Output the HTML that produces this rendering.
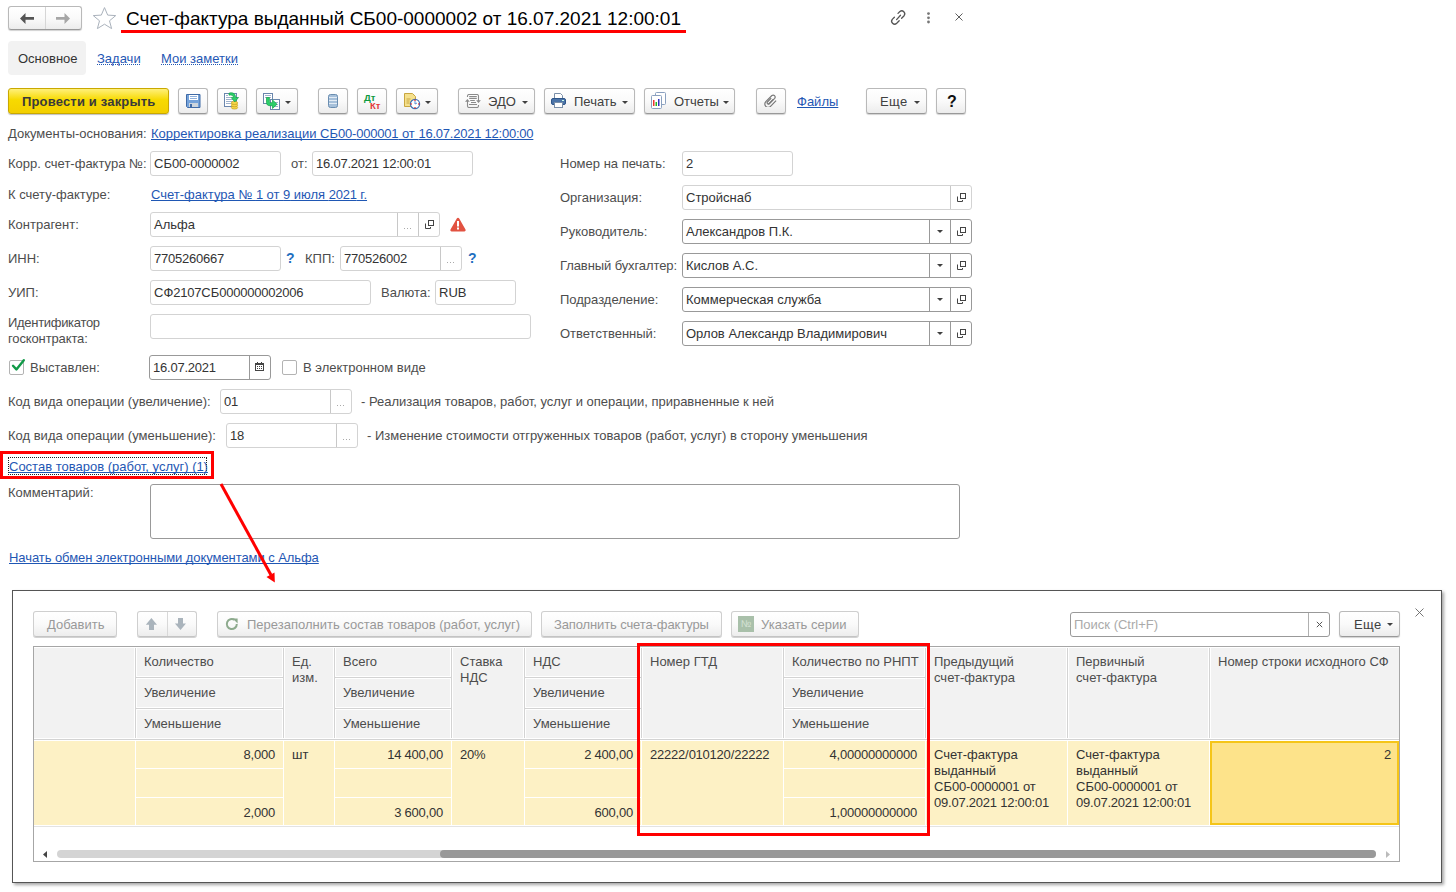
<!DOCTYPE html><html><head><meta charset="utf-8"><title>1C</title><style>
*{margin:0;padding:0;box-sizing:border-box}
html,body{width:1456px;height:892px;overflow:hidden;background:#fff}
body{position:relative;font-family:"Liberation Sans",sans-serif;font-size:13px;color:#4d4d4d}
.t{position:absolute;white-space:nowrap}
.lnk{text-decoration:underline;text-underline-offset:1px;text-decoration-skip-ink:none}
.b{position:absolute}
.inp{position:absolute;border:1px solid #d3d3d3;border-radius:3px;background:#fff}
.it{position:absolute;white-space:nowrap;color:#333;line-height:15px;font-size:13px}
.ib{position:absolute;top:0;bottom:0}
.btn{position:absolute;border:1px solid #b9b9b9;border-bottom-color:#999;border-radius:3px;background:linear-gradient(#fff,#fafafa 50%,#ececec);box-shadow:0 1px 1px rgba(0,0,0,.18)}
.btn .t{color:#404040}
.dbtn{position:absolute;border:1px solid #cfcfcf;border-bottom-color:#c4c4c4;border-radius:3px;background:linear-gradient(#fff,#fafafa 50%,#ededed);box-shadow:0 1px 0 #d2d2d2}
.ic{position:absolute}
svg{display:block}
.d{letter-spacing:-0.23px}
</style></head><body>
<div class="btn" style="left:8px;top:6px;width:74px;height:24px"></div>
<div class="b" style="left:45px;top:7px;width:1px;height:22px;background:#d6d6d6"></div>
<svg class="ic" style="left:20px;top:13px" width="15" height="11" viewBox="0 0 15 11"><path d="M0 5.5L5.5 0v4h8.5v2.8H5.5V11z" fill="#555"/></svg>
<svg class="ic" style="left:56px;top:13px" width="15" height="11" viewBox="0 0 15 11"><path d="M14 5.5L8.5 0v4H0v2.8h8.5V11z" fill="#a6a6a6"/></svg>
<svg class="ic" style="left:92px;top:6px" width="25" height="24" viewBox="0 0 25 24"><path d="M12.5 1.6l3.2 7.5 8 .5-6.2 5.2 2.1 7.8-7.1-4.4-7.1 4.4 2.1-7.8L1.3 9.6l8-.5z" fill="none" stroke="#aab2bc" stroke-width="1"/></svg>
<div class="t " style="left:126px;top:8px;font-size:19px;line-height:22px;color:#000;font-weight:normal;">Счет-фактура выданный СБ00-0000002 от 16.07.2021 12:00:01</div>
<div class="b" style="left:121px;top:30px;width:565px;height:3px;background:#f00"></div>
<svg class="ic" style="left:886px;top:5px" width="24" height="24" viewBox="0 0 24 24"><g fill="none" stroke="#555" stroke-width="1.3" stroke-linecap="round"><path d="M12 8.4L13.9 6.5A3 3 0 0 1 18.1 10.7L15.6 13.2"/><path d="M13.2 15.8L10.72 18.32A3 3 0 0 1 6.48 14.08L8.4 12.2"/><path d="M10.6 14.6L14.5 10.3"/></g></svg>
<svg class="ic" style="left:926px;top:12px" width="5" height="12" viewBox="0 0 5 12"><circle cx="2.5" cy="1.6" r="1.4" fill="#777"/><circle cx="2.5" cy="5.8" r="1.4" fill="#777"/><circle cx="2.5" cy="10" r="1.4" fill="#777"/></svg>
<svg class="ic" style="left:955px;top:13px" width="8" height="8" viewBox="0 0 8 8"><path d="M0.5 0.5l7 7M7.5 0.5l-7 7" stroke="#555" stroke-width="0.95"/></svg>
<div class="b" style="left:8px;top:41px;width:78px;height:34px;background:#f2f2f2;border-radius:4px"></div>
<div class="t " style="left:18px;top:51px;font-size:13px;line-height:15px;color:#333;font-weight:normal;">Основное</div>
<div class="t " style="left:97px;top:51px;font-size:13px;line-height:15px;color:#1f57b4;font-weight:normal;">Задачи</div>
<div class="t " style="left:161px;top:51px;font-size:13px;line-height:15px;color:#1f57b4;font-weight:normal;">Мои заметки</div>
<div class="b" style="left:97px;top:64px;width:43px;height:1px;border-top:1px dotted #1f57b4"></div>
<div class="b" style="left:161px;top:64px;width:77px;height:1px;border-top:1px dotted #1f57b4"></div>
<div class="b" style="left:8px;top:88px;width:161px;height:26px;border:1px solid #c9a800;border-radius:3px;background:linear-gradient(#fff07a,#f7da00 45%,#f3cf00);box-shadow:0 1px 1px rgba(0,0,0,.25)"></div>
<div class="t " style="left:22px;top:94px;font-size:13px;line-height:15px;color:#3a3a3a;font-weight:bold;letter-spacing:0.17px">Провести и закрыть</div>
<div class="btn" style="left:178px;top:88px;width:30px;height:26px"></div>
<div class="btn" style="left:217px;top:88px;width:30px;height:26px"></div>
<div class="btn" style="left:256px;top:88px;width:42px;height:26px"></div>
<div class="btn" style="left:318px;top:88px;width:30px;height:26px"></div>
<div class="btn" style="left:357px;top:88px;width:30px;height:26px"></div>
<div class="btn" style="left:396px;top:88px;width:42px;height:26px"></div>
<div class="btn" style="left:458px;top:88px;width:77px;height:26px"></div>
<div class="btn" style="left:544px;top:88px;width:91px;height:26px"></div>
<div class="btn" style="left:644px;top:88px;width:91px;height:26px"></div>
<div class="btn" style="left:756px;top:88px;width:30px;height:26px"></div>
<div class="btn" style="left:866px;top:88px;width:61px;height:26px"></div>
<div class="btn" style="left:936px;top:88px;width:30px;height:26px"></div>
<svg class="ic" style="left:186px;top:94px" width="15" height="14" viewBox="0 0 15 14"><path d="M0.5 0.5h13.5v13h-12.5l-1-1z" fill="#74a2da" stroke="#3f6aa6"/><rect x="3" y="1" width="9" height="5" fill="#fff"/><path d="M4 2.5h7M4 4.5h7" stroke="#8eb0dc"/><rect x="3" y="9" width="9" height="4" fill="#cdd5dd"/><rect x="4" y="10" width="2" height="3" fill="#3f6aa6"/></svg>
<svg class="ic" style="left:223px;top:92px" width="17" height="18" viewBox="0 0 17 18"><rect x="1.5" y="1.5" width="12" height="13" fill="#fff" stroke="#6a86ad"/><path d="M3 3.5h2M3 5.5h5M3 7.5h7M3 9.5h7M3 11.5h6" stroke="#9fb2cc"/><g stroke="#c9a21b" stroke-width=".7" fill="#f4d54a"><ellipse cx="11.5" cy="15.5" rx="3.2" ry="1.6"/><ellipse cx="11.5" cy="13.2" rx="3.2" ry="1.6"/><ellipse cx="11.5" cy="10.9" rx="3.2" ry="1.6"/></g><path d="M6 1.2C9 0.2 12.5 1 12.5 5.5H15.5L11.8 10 8.2 5.5H10.5C10.3 3.3 8.6 2.6 6 3.2z" fill="#2ccf6a" stroke="#12a048" stroke-width=".7"/></svg>
<svg class="ic" style="left:262px;top:92px" width="19" height="19" viewBox="0 0 19 19"><rect x="1.5" y="1.5" width="9" height="10" fill="#fff" stroke="#6a86ad"/><path d="M3 3.5h6M3 5.5h6" stroke="#9fb2cc"/><rect x="8.5" y="7.5" width="9" height="10" fill="#fff" stroke="#6a86ad"/><path d="M11 10.5h5M11 12.5h5M11 14.5h5" stroke="#9fb2cc"/><path d="M4.5 5.5v5c0 2.2 1.3 3.2 3.5 3.2h2.5v2.8l4.5-4.3-4.5-4.3v2.8H8.3c-.6 0-.9-.3-.9-.9V5.5z" fill="#2ccf6a" stroke="#12a048" stroke-width=".7"/></svg>
<div class="ic" style="left:285px;top:101px"><svg width="6" height="3" viewBox="0 0 6 3"><path d="M0 0h6L3 3z" fill="#404040"/></svg></div>
<svg class="ic" style="left:328px;top:94px" width="10" height="14" viewBox="0 0 10 14"><rect x="0.5" y="0.5" width="9" height="13" rx="2" fill="#a6c0da" stroke="#6a8db0"/><path d="M1 3.5h8M1 6.5h8M1 9.5h8" stroke="#e3ecf5"/></svg>
<div class="t" style="left:364px;top:93px;font-size:9.5px;line-height:10px;color:#0d9a3e;font-weight:bold">Дт</div>
<div class="t" style="left:370px;top:101px;font-size:9.5px;line-height:10px;color:#e23a3a;font-weight:bold">Кт</div>
<svg class="ic" style="left:404px;top:93px" width="17" height="17" viewBox="0 0 17 17"><path d="M0.5 0.5h8l3 3v10h-11z" fill="#f5e08c" stroke="#c8a640"/><path d="M2.5 6h4M2.5 8h3M2.5 10h3" stroke="#c8a640"/><circle cx="11" cy="11" r="4.6" fill="#fff" stroke="#3f70b5" stroke-width="1.2"/><path d="M11 8v3l2-1" stroke="#5a8ad0" fill="none"/><circle cx="11" cy="7.2" r=".8" fill="#e22"/><circle cx="11" cy="14.8" r=".8" fill="#e22"/><circle cx="7.2" cy="11" r=".8" fill="#e22"/><circle cx="14.8" cy="11" r=".8" fill="#e22"/></svg>
<div class="ic" style="left:425px;top:101px"><svg width="6" height="3" viewBox="0 0 6 3"><path d="M0 0h6L3 3z" fill="#404040"/></svg></div>
<svg class="ic" style="left:465px;top:94px" width="16" height="14" viewBox="0 0 16 14"><g fill="none" stroke="#8a8a8a" stroke-width="1.1"><path d="M2.5 3V2Q2.5 .5 4 .5H12Q13.5 .5 13.5 2V7"/><path d="M2.5 7V12Q2.5 13.5 4 13.5H12Q13.5 13.5 13.5 12V11"/><path d="M4.2 2.5H11.8M4.2 4.4H11.8M5.2 6.5H9.8M6 8.5H11M4 10.5H12"/></g><path d="M11.1 6.2H15.9L13.5 9z M0 7.8H4.8L2.4 5z" fill="#8a8a8a"/></svg>
<div class="t " style="left:488px;top:94px;font-size:13px;line-height:15px;color:#404040;font-weight:normal;">ЭДО</div>
<div class="ic" style="left:522px;top:101px"><svg width="6" height="3" viewBox="0 0 6 3"><path d="M0 0h6L3 3z" fill="#404040"/></svg></div>
<svg class="ic" style="left:551px;top:93px" width="15" height="15" viewBox="0 0 15 15"><path d="M3.5 0.5h6l2 2v3h-8z" fill="#fff" stroke="#7a8fa8"/><rect x="0.5" y="5.5" width="14" height="6" rx="1.5" fill="#4b74a8" stroke="#2f5689"/><rect x="3.5" y="9.5" width="8" height="5" fill="#fff" stroke="#7a8fa8"/><rect x="11" y="7" width="2" height="1" fill="#cfe"/></svg>
<div class="t " style="left:574px;top:94px;font-size:13px;line-height:15px;color:#404040;font-weight:normal;">Печать</div>
<div class="ic" style="left:622px;top:101px"><svg width="6" height="3" viewBox="0 0 6 3"><path d="M0 0h6L3 3z" fill="#404040"/></svg></div>
<svg class="ic" style="left:650px;top:92px" width="17" height="17" viewBox="0 0 17 17"><rect x="5.5" y="0.5" width="10" height="12" rx="1" fill="#fff" stroke="#8aa0bf"/><rect x="1.5" y="3.5" width="10" height="13" rx="1" fill="#fff" stroke="#8aa0bf"/><rect x="3" y="8" width="1.5" height="6" fill="#e33"/><rect x="5.5" y="10" width="1.5" height="4" fill="#2b2"/><rect x="8" y="7" width="1.5" height="7" fill="#33b"/></svg>
<div class="t " style="left:674px;top:94px;font-size:13px;line-height:15px;color:#404040;font-weight:normal;">Отчеты</div>
<div class="ic" style="left:723px;top:101px"><svg width="6" height="3" viewBox="0 0 6 3"><path d="M0 0h6L3 3z" fill="#404040"/></svg></div>
<svg class="ic" style="left:764px;top:93px" width="14" height="14" viewBox="0 0 14 14"><path d="M4.5 11.5l6.2-6.2a2 2 0 0 0-2.8-2.8L1.8 8.6a3.3 3.3 0 0 0 4.7 4.7l5.6-5.6" fill="none" stroke="#777" stroke-width="1.2"/><path d="M7.2 5.2l-3.8 3.8a1.1 1.1 0 0 0 1.6 1.6l4.1-4.1" fill="none" stroke="#777" stroke-width="1.2"/></svg>
<div class="t lnk" style="left:797px;top:94px;font-size:13px;line-height:15px;color:#1f57b4;font-weight:normal;">Файлы</div>
<div class="t " style="left:880px;top:94px;font-size:13px;line-height:15px;color:#404040;font-weight:normal;letter-spacing:0.45px">Еще</div>
<div class="ic" style="left:914px;top:101px"><svg width="6" height="3" viewBox="0 0 6 3"><path d="M0 0h6L3 3z" fill="#404040"/></svg></div>
<div class="t" style="left:947px;top:93px;font-size:16px;line-height:18px;color:#111;font-weight:bold">?</div>
<div class="t " style="left:8px;top:126px;font-size:13px;line-height:15px;color:#4d4d4d;font-weight:normal;">Документы-основания:</div>
<div class="t lnk" style="left:151px;top:126px;font-size:13px;line-height:15px;color:#1f57b4;font-weight:normal;">Корректировка реализации СБ<span class="d">00</span>-<span class="d">000001</span> от <span class="d">16.07.2021 12:00:00</span></div>
<div class="t " style="left:8px;top:156px;font-size:13px;line-height:15px;color:#4d4d4d;font-weight:normal;">Корр. счет-фактура №:</div>
<div class="inp" style="left:150px;top:151px;width:131px;height:25px;border-color:#d3d3d3">
<div class="it" style="left:3px;top:4px">СБ<span class="d">00</span>-<span class="d">0000002</span></div>
</div>
<div class="t " style="left:291px;top:156px;font-size:13px;line-height:15px;color:#4d4d4d;font-weight:normal;">от:</div>
<div class="inp" style="left:312px;top:151px;width:161px;height:25px;border-color:#d3d3d3">
<div class="it" style="left:3px;top:4px"><span class="d">16.07.2021 12:00:01</span></div>
</div>
<div class="t " style="left:8px;top:187px;font-size:13px;line-height:15px;color:#4d4d4d;font-weight:normal;">К счету-фактуре:</div>
<div class="t lnk" style="left:151px;top:187px;font-size:13px;line-height:15px;color:#1f57b4;font-weight:normal;">Счет-фактура № <span class="d">1</span> от <span class="d">9</span> июля <span class="d">2021</span> г.</div>
<div class="t " style="left:8px;top:217px;font-size:13px;line-height:15px;color:#4d4d4d;font-weight:normal;">Контрагент:</div>
<div class="inp" style="left:150px;top:212px;width:290px;height:25px;border-color:#d3d3d3">
<div class="it" style="left:3px;top:4px">Альфа</div>
<div class="ib" style="left:267px;width:21px;border-left:1px solid #c8c8c8">
<div style="position:absolute;left:6px;top:7px"><svg width="9" height="9" viewBox="0 0 9 9"><path d="M0.5 3.5v5h5v-1.5" fill="none" stroke="#444" stroke-width="1"/><rect x="3.5" y="0.5" width="5" height="5" fill="none" stroke="#444" stroke-width="1"/></svg></div>
</div>
<div class="ib" style="left:246px;width:21px;border-left:1px solid #c8c8c8">
<div style="position:absolute;left:6px;top:14px"><svg width="8" height="3" viewBox="0 0 8 3"><rect x="0" y="1" width="1" height="1" fill="#aaa"/><rect x="3" y="1" width="1" height="1" fill="#aaa"/><rect x="6" y="1" width="1" height="1" fill="#aaa"/></svg></div>
</div>
</div>
<svg class="ic" style="left:450px;top:217px" width="16" height="15" viewBox="0 0 16 15"><path d="M8 0.8c.5 0 .9.3 1.2.8l6.3 11c.5.9-.1 2-1.2 2H1.7c-1.1 0-1.7-1.1-1.2-2l6.3-11c.3-.5.7-.8 1.2-.8z" fill="#e25241"/><rect x="7" y="4" width="2" height="5.5" fill="#fff"/><rect x="7" y="10.5" width="2" height="2" fill="#fff"/></svg>
<div class="t " style="left:8px;top:251px;font-size:13px;line-height:15px;color:#4d4d4d;font-weight:normal;">ИНН:</div>
<div class="inp" style="left:150px;top:246px;width:131px;height:25px;border-color:#d3d3d3">
<div class="it" style="left:3px;top:4px"><span class="d">7705260667</span></div>
</div>
<div class="t " style="left:286px;top:250px;font-size:14px;line-height:16px;color:#1f6fc0;font-weight:bold;">?</div>
<div class="t " style="left:305px;top:251px;font-size:13px;line-height:15px;color:#4d4d4d;font-weight:normal;">КПП:</div>
<div class="inp" style="left:340px;top:246px;width:122px;height:25px;border-color:#d3d3d3">
<div class="it" style="left:3px;top:4px"><span class="d">770526002</span></div>
<div class="ib" style="left:99px;width:21px;border-left:1px solid #c8c8c8">
<div style="position:absolute;left:6px;top:14px"><svg width="8" height="3" viewBox="0 0 8 3"><rect x="0" y="1" width="1" height="1" fill="#aaa"/><rect x="3" y="1" width="1" height="1" fill="#aaa"/><rect x="6" y="1" width="1" height="1" fill="#aaa"/></svg></div>
</div>
</div>
<div class="t " style="left:468px;top:250px;font-size:14px;line-height:16px;color:#1f6fc0;font-weight:bold;">?</div>
<div class="t " style="left:8px;top:285px;font-size:13px;line-height:15px;color:#4d4d4d;font-weight:normal;">УИП:</div>
<div class="inp" style="left:150px;top:280px;width:221px;height:25px;border-color:#d3d3d3">
<div class="it" style="left:3px;top:4px">СФ<span class="d">2107</span>СБ<span class="d">000000002006</span></div>
</div>
<div class="t " style="left:381px;top:285px;font-size:13px;line-height:15px;color:#4d4d4d;font-weight:normal;">Валюта:</div>
<div class="inp" style="left:435px;top:280px;width:81px;height:25px;border-color:#d3d3d3">
<div class="it" style="left:3px;top:4px">RUB</div>
</div>
<div class="t " style="left:8px;top:315px;font-size:13px;line-height:15px;color:#4d4d4d;font-weight:normal;letter-spacing:-0.3px">Идентификатор</div>
<div class="t " style="left:8px;top:331px;font-size:13px;line-height:15px;color:#4d4d4d;font-weight:normal;letter-spacing:-0.13px">госконтракта:</div>
<div class="inp" style="left:150px;top:314px;width:381px;height:25px;border-color:#d3d3d3">
</div>
<div class="b" style="left:9px;top:360px;width:15px;height:15px;border:1px solid #b3b3b3;border-radius:2px;background:#fff"></div>
<svg class="ic" style="left:10px;top:357px" width="16" height="16" viewBox="0 0 16 16"><path d="M3 8.8L6.4 12.4L13.8 3.2" fill="none" stroke="#119a48" stroke-width="2.4" stroke-linecap="round" stroke-linejoin="round"/></svg>
<div class="t " style="left:30px;top:360px;font-size:13px;line-height:15px;color:#4d4d4d;font-weight:normal;">Выставлен:</div>
<div class="inp" style="left:149px;top:355px;width:122px;height:25px;border-color:#999">
<div class="it" style="left:3px;top:4px"><span class="d">16.07.2021</span></div>
<div class="ib" style="left:99px;width:21px;border-left:1px solid #999">
<div style="position:absolute;left:5px;top:6px"><svg width="9" height="9" viewBox="0 0 9 9"><rect x="0.5" y="1.5" width="8" height="7" fill="none" stroke="#444"/><rect x="0" y="1" width="9" height="2" fill="#444"/><rect x="2" y="0" width="1" height="2" fill="#444"/><rect x="6" y="0" width="1" height="2" fill="#444"/><rect x="2" y="4" width="1" height="1" fill="#444"/><rect x="4" y="4" width="1" height="1" fill="#444"/><rect x="6" y="4" width="1" height="1" fill="#444"/><rect x="2" y="6" width="1" height="1" fill="#444"/><rect x="4" y="6" width="1" height="1" fill="#444"/><rect x="6" y="6" width="1" height="1" fill="#444"/></svg></div>
</div>
</div>
<div class="b" style="left:282px;top:360px;width:15px;height:15px;border:1px solid #b3b3b3;border-radius:2px;background:#fff"></div>
<div class="t " style="left:303px;top:360px;font-size:13px;line-height:15px;color:#4d4d4d;font-weight:normal;">В электронном виде</div>
<div class="t " style="left:8px;top:394px;font-size:13px;line-height:15px;color:#4d4d4d;font-weight:normal;">Код вида операции (увеличение):</div>
<div class="inp" style="left:220px;top:389px;width:132px;height:25px;border-color:#d3d3d3">
<div class="it" style="left:3px;top:4px"><span class="d">01</span></div>
<div class="ib" style="left:109px;width:21px;border-left:1px solid #c8c8c8">
<div style="position:absolute;left:6px;top:14px"><svg width="8" height="3" viewBox="0 0 8 3"><rect x="0" y="1" width="1" height="1" fill="#aaa"/><rect x="3" y="1" width="1" height="1" fill="#aaa"/><rect x="6" y="1" width="1" height="1" fill="#aaa"/></svg></div>
</div>
</div>
<div class="t " style="left:361px;top:394px;font-size:13px;line-height:15px;color:#4d4d4d;font-weight:normal;letter-spacing:-0.02px">- Реализация товаров, работ, услуг и операции, приравненные к ней</div>
<div class="t " style="left:8px;top:428px;font-size:13px;line-height:15px;color:#4d4d4d;font-weight:normal;">Код вида операции (уменьшение):</div>
<div class="inp" style="left:226px;top:423px;width:132px;height:25px;border-color:#d3d3d3">
<div class="it" style="left:3px;top:4px"><span class="d">18</span></div>
<div class="ib" style="left:109px;width:21px;border-left:1px solid #c8c8c8">
<div style="position:absolute;left:6px;top:14px"><svg width="8" height="3" viewBox="0 0 8 3"><rect x="0" y="1" width="1" height="1" fill="#aaa"/><rect x="3" y="1" width="1" height="1" fill="#aaa"/><rect x="6" y="1" width="1" height="1" fill="#aaa"/></svg></div>
</div>
</div>
<div class="t " style="left:367px;top:428px;font-size:13px;line-height:15px;color:#4d4d4d;font-weight:normal;">- Изменение стоимости отгруженных товаров (работ, услуг) в сторону уменьшения</div>
<div class="b" style="left:8px;top:457px;width:199px;height:18px;border:1px dotted #222"></div>
<div class="t lnk" style="left:9px;top:459px;font-size:13px;line-height:15px;color:#1f57b4;font-weight:normal;">Состав товаров (работ, услуг) (<span class="d">1</span>)</div>
<div class="b" style="left:0px;top:451px;width:214px;height:28px;border:3px solid #f00"></div>
<div class="t " style="left:8px;top:485px;font-size:13px;line-height:15px;color:#4d4d4d;font-weight:normal;">Комментарий:</div>
<div class="inp" style="left:150px;top:484px;width:810px;height:55px;border-color:#999"></div>
<div class="t lnk" style="left:9px;top:550px;font-size:13px;line-height:15px;color:#1f57b4;font-weight:normal;letter-spacing:-0.07px">Начать обмен электронными документами с Альфа</div>
<div class="t " style="left:560px;top:156px;font-size:13px;line-height:15px;color:#4d4d4d;font-weight:normal;">Номер на печать:</div>
<div class="inp" style="left:682px;top:151px;width:111px;height:25px;border-color:#d3d3d3">
<div class="it" style="left:3px;top:4px"><span class="d">2</span></div>
</div>
<div class="t " style="left:560px;top:190px;font-size:13px;line-height:15px;color:#4d4d4d;font-weight:normal;">Организация:</div>
<div class="inp" style="left:682px;top:185px;width:290px;height:25px;border-color:#d3d3d3">
<div class="it" style="left:3px;top:4px">Стройснаб</div>
<div class="ib" style="left:267px;width:21px;border-left:1px solid #c8c8c8">
<div style="position:absolute;left:6px;top:7px"><svg width="9" height="9" viewBox="0 0 9 9"><path d="M0.5 3.5v5h5v-1.5" fill="none" stroke="#444" stroke-width="1"/><rect x="3.5" y="0.5" width="5" height="5" fill="none" stroke="#444" stroke-width="1"/></svg></div>
</div>
</div>
<div class="t " style="left:560px;top:224px;font-size:13px;line-height:15px;color:#4d4d4d;font-weight:normal;">Руководитель:</div>
<div class="inp" style="left:682px;top:219px;width:290px;height:25px;border-color:#999">
<div class="it" style="left:3px;top:4px">Александров П.К.</div>
<div class="ib" style="left:267px;width:21px;border-left:1px solid #999">
<div style="position:absolute;left:6px;top:7px"><svg width="9" height="9" viewBox="0 0 9 9"><path d="M0.5 3.5v5h5v-1.5" fill="none" stroke="#444" stroke-width="1"/><rect x="3.5" y="0.5" width="5" height="5" fill="none" stroke="#444" stroke-width="1"/></svg></div>
</div>
<div class="ib" style="left:246px;width:21px;border-left:1px solid #999">
<div style="position:absolute;left:7px;top:10px"><svg width="6" height="3" viewBox="0 0 6 3"><path d="M0 0h6L3 3z" fill="#404040"/></svg></div>
</div>
</div>
<div class="t " style="left:560px;top:258px;font-size:13px;line-height:15px;color:#4d4d4d;font-weight:normal;letter-spacing:-0.1px">Главный бухгалтер:</div>
<div class="inp" style="left:682px;top:253px;width:290px;height:25px;border-color:#999">
<div class="it" style="left:3px;top:4px">Кислов А.С.</div>
<div class="ib" style="left:267px;width:21px;border-left:1px solid #999">
<div style="position:absolute;left:6px;top:7px"><svg width="9" height="9" viewBox="0 0 9 9"><path d="M0.5 3.5v5h5v-1.5" fill="none" stroke="#444" stroke-width="1"/><rect x="3.5" y="0.5" width="5" height="5" fill="none" stroke="#444" stroke-width="1"/></svg></div>
</div>
<div class="ib" style="left:246px;width:21px;border-left:1px solid #999">
<div style="position:absolute;left:7px;top:10px"><svg width="6" height="3" viewBox="0 0 6 3"><path d="M0 0h6L3 3z" fill="#404040"/></svg></div>
</div>
</div>
<div class="t " style="left:560px;top:292px;font-size:13px;line-height:15px;color:#4d4d4d;font-weight:normal;">Подразделение:</div>
<div class="inp" style="left:682px;top:287px;width:290px;height:25px;border-color:#999">
<div class="it" style="left:3px;top:4px">Коммерческая служба</div>
<div class="ib" style="left:267px;width:21px;border-left:1px solid #999">
<div style="position:absolute;left:6px;top:7px"><svg width="9" height="9" viewBox="0 0 9 9"><path d="M0.5 3.5v5h5v-1.5" fill="none" stroke="#444" stroke-width="1"/><rect x="3.5" y="0.5" width="5" height="5" fill="none" stroke="#444" stroke-width="1"/></svg></div>
</div>
<div class="ib" style="left:246px;width:21px;border-left:1px solid #999">
<div style="position:absolute;left:7px;top:10px"><svg width="6" height="3" viewBox="0 0 6 3"><path d="M0 0h6L3 3z" fill="#404040"/></svg></div>
</div>
</div>
<div class="t " style="left:560px;top:326px;font-size:13px;line-height:15px;color:#4d4d4d;font-weight:normal;">Ответственный:</div>
<div class="inp" style="left:682px;top:321px;width:290px;height:25px;border-color:#999">
<div class="it" style="left:3px;top:4px">Орлов Александр Владимирович</div>
<div class="ib" style="left:267px;width:21px;border-left:1px solid #999">
<div style="position:absolute;left:6px;top:7px"><svg width="9" height="9" viewBox="0 0 9 9"><path d="M0.5 3.5v5h5v-1.5" fill="none" stroke="#444" stroke-width="1"/><rect x="3.5" y="0.5" width="5" height="5" fill="none" stroke="#444" stroke-width="1"/></svg></div>
</div>
<div class="ib" style="left:246px;width:21px;border-left:1px solid #999">
<div style="position:absolute;left:7px;top:10px"><svg width="6" height="3" viewBox="0 0 6 3"><path d="M0 0h6L3 3z" fill="#404040"/></svg></div>
</div>
</div>
<svg class="ic" style="left:0;top:0" width="1456" height="892" viewBox="0 0 1456 892"><path d="M221 484L271 575" stroke="#f00" stroke-width="3"/><path d="M274.8 582.5L266.5 577L274.5 572.6z" fill="#f00"/></svg>
<div class="b" style="left:12px;top:590px;width:1430px;height:293px;border:1px solid #555;background:#fff;box-shadow:2px 2px 3px rgba(0,0,0,.35)"></div>
<svg class="ic" style="left:1415px;top:608px" width="9" height="9" viewBox="0 0 9 9"><path d="M0.5 0.5l8 8M8.5 0.5l-8 8" stroke="#666" stroke-width="0.9"/></svg>
<div class="dbtn" style="left:33px;top:611px;width:84px;height:26px"></div>
<div class="t " style="left:47px;top:617px;font-size:13px;line-height:15px;color:#999;font-weight:normal;">Добавить</div>
<div class="dbtn" style="left:137px;top:611px;width:60px;height:26px"></div>
<div class="b" style="left:167px;top:612px;width:1px;height:24px;background:#d8d8d8"></div>
<svg class="ic" style="left:145px;top:617px" width="13" height="14" viewBox="0 0 13 14"><path d="M6.4 1L12 7.7H9V13H4V7.7H0.8z" fill="#aab4bc"/></svg>
<svg class="ic" style="left:174px;top:617px" width="13" height="14" viewBox="0 0 13 14"><path d="M6.5 13L12 6.4H9V1H4V6.4H0.9z" fill="#aab4bc"/></svg>
<div class="dbtn" style="left:217px;top:611px;width:315px;height:26px"></div>
<svg class="ic" style="left:225px;top:617px" width="14" height="14" viewBox="0 0 14 14"><path d="M11.8 7A5 5 0 1 1 9.6 2.9" fill="none" stroke="#8daa8d" stroke-width="2"/><path d="M7.6 1.5H12.6V6.5z" fill="#8daa8d"/></svg>
<div class="t " style="left:247px;top:617px;font-size:13px;line-height:15px;color:#999;font-weight:normal;">Перезаполнить состав товаров (работ, услуг)</div>
<div class="dbtn" style="left:541px;top:611px;width:181px;height:26px"></div>
<div class="t " style="left:554px;top:617px;font-size:13px;line-height:15px;color:#999;font-weight:normal;letter-spacing:-0.12px">Заполнить счета-фактуры</div>
<div class="dbtn" style="left:731px;top:611px;width:128px;height:26px"></div>
<div class="b" style="left:738px;top:616px;width:16px;height:16px;background:#a9c0aa;color:#d5e2d5;font-size:10px;line-height:16px;text-align:center">№</div>
<div class="t " style="left:761px;top:617px;font-size:13px;line-height:15px;color:#999;font-weight:normal;">Указать серии</div>
<div class="inp" style="left:1070px;top:612px;width:260px;height:25px;border-color:#999">
</div>
<div class="t " style="left:1074px;top:617px;font-size:13px;line-height:15px;color:#aaa;font-weight:normal;">Поиск (Ctrl+F)</div>
<div class="b" style="left:1308px;top:613px;width:1px;height:23px;background:#b0b0b0"></div>
<svg class="ic" style="left:1316px;top:621px" width="7" height="7" viewBox="0 0 7 7"><path d="M.8 .8l5.4 5.4M6.2 .8l-5.4 5.4" stroke="#555" stroke-width="1"/></svg>
<div class="btn" style="left:1339px;top:611px;width:61px;height:26px"></div>
<div class="t " style="left:1354px;top:617px;font-size:13px;line-height:15px;color:#404040;font-weight:normal;letter-spacing:0.45px">Еще</div>
<div class="ic" style="left:1387px;top:623px"><svg width="6" height="3" viewBox="0 0 6 3"><path d="M0 0h6L3 3z" fill="#404040"/></svg></div>
<div class="b" style="left:33px;top:646px;width:1367px;height:216px;border:1px solid #a6a6a6;background:#fff"></div>
<div class="b" style="left:34px;top:647px;width:1365px;height:92px;background:#f2f2f2"></div>
<div class="b" style="left:34px;top:741px;width:1365px;height:84px;background:#fdf1c5"></div>
<div class="b" style="left:135px;top:647px;width:1px;height:93px;background:#d3d3d3"></div>
<div class="b" style="left:134px;top:647px;width:1px;height:91px;background:#fff"></div>
<div class="b" style="left:136px;top:647px;width:1px;height:91px;background:#fff"></div>
<div class="b" style="left:283px;top:647px;width:1px;height:93px;background:#d3d3d3"></div>
<div class="b" style="left:282px;top:647px;width:1px;height:91px;background:#fff"></div>
<div class="b" style="left:284px;top:647px;width:1px;height:91px;background:#fff"></div>
<div class="b" style="left:334px;top:647px;width:1px;height:93px;background:#d3d3d3"></div>
<div class="b" style="left:333px;top:647px;width:1px;height:91px;background:#fff"></div>
<div class="b" style="left:335px;top:647px;width:1px;height:91px;background:#fff"></div>
<div class="b" style="left:451px;top:647px;width:1px;height:93px;background:#d3d3d3"></div>
<div class="b" style="left:450px;top:647px;width:1px;height:91px;background:#fff"></div>
<div class="b" style="left:452px;top:647px;width:1px;height:91px;background:#fff"></div>
<div class="b" style="left:524px;top:647px;width:1px;height:93px;background:#d3d3d3"></div>
<div class="b" style="left:523px;top:647px;width:1px;height:91px;background:#fff"></div>
<div class="b" style="left:525px;top:647px;width:1px;height:91px;background:#fff"></div>
<div class="b" style="left:641px;top:647px;width:1px;height:93px;background:#d3d3d3"></div>
<div class="b" style="left:640px;top:647px;width:1px;height:91px;background:#fff"></div>
<div class="b" style="left:642px;top:647px;width:1px;height:91px;background:#fff"></div>
<div class="b" style="left:783px;top:647px;width:1px;height:93px;background:#d3d3d3"></div>
<div class="b" style="left:782px;top:647px;width:1px;height:91px;background:#fff"></div>
<div class="b" style="left:784px;top:647px;width:1px;height:91px;background:#fff"></div>
<div class="b" style="left:925px;top:647px;width:1px;height:93px;background:#d3d3d3"></div>
<div class="b" style="left:924px;top:647px;width:1px;height:91px;background:#fff"></div>
<div class="b" style="left:926px;top:647px;width:1px;height:91px;background:#fff"></div>
<div class="b" style="left:1067px;top:647px;width:1px;height:93px;background:#d3d3d3"></div>
<div class="b" style="left:1066px;top:647px;width:1px;height:91px;background:#fff"></div>
<div class="b" style="left:1068px;top:647px;width:1px;height:91px;background:#fff"></div>
<div class="b" style="left:1209px;top:647px;width:1px;height:93px;background:#d3d3d3"></div>
<div class="b" style="left:1208px;top:647px;width:1px;height:91px;background:#fff"></div>
<div class="b" style="left:1210px;top:647px;width:1px;height:91px;background:#fff"></div>
<div class="b" style="left:34px;top:739px;width:1365px;height:1px;background:#d3d3d3"></div>
<div class="b" style="left:34px;top:738px;width:1365px;height:1px;background:#fff"></div>
<div class="b" style="left:34px;top:740px;width:1365px;height:1px;background:#fff"></div>
<div class="b" style="left:136px;top:677px;width:147px;height:1px;background:#d3d3d3"></div>
<div class="b" style="left:136px;top:676px;width:147px;height:1px;background:#fff"></div>
<div class="b" style="left:136px;top:678px;width:147px;height:1px;background:#fff"></div>
<div class="b" style="left:136px;top:708px;width:147px;height:1px;background:#d3d3d3"></div>
<div class="b" style="left:136px;top:707px;width:147px;height:1px;background:#fff"></div>
<div class="b" style="left:136px;top:709px;width:147px;height:1px;background:#fff"></div>
<div class="b" style="left:335px;top:677px;width:116px;height:1px;background:#d3d3d3"></div>
<div class="b" style="left:335px;top:676px;width:116px;height:1px;background:#fff"></div>
<div class="b" style="left:335px;top:678px;width:116px;height:1px;background:#fff"></div>
<div class="b" style="left:335px;top:708px;width:116px;height:1px;background:#d3d3d3"></div>
<div class="b" style="left:335px;top:707px;width:116px;height:1px;background:#fff"></div>
<div class="b" style="left:335px;top:709px;width:116px;height:1px;background:#fff"></div>
<div class="b" style="left:525px;top:677px;width:116px;height:1px;background:#d3d3d3"></div>
<div class="b" style="left:525px;top:676px;width:116px;height:1px;background:#fff"></div>
<div class="b" style="left:525px;top:678px;width:116px;height:1px;background:#fff"></div>
<div class="b" style="left:525px;top:708px;width:116px;height:1px;background:#d3d3d3"></div>
<div class="b" style="left:525px;top:707px;width:116px;height:1px;background:#fff"></div>
<div class="b" style="left:525px;top:709px;width:116px;height:1px;background:#fff"></div>
<div class="b" style="left:784px;top:677px;width:141px;height:1px;background:#d3d3d3"></div>
<div class="b" style="left:784px;top:676px;width:141px;height:1px;background:#fff"></div>
<div class="b" style="left:784px;top:678px;width:141px;height:1px;background:#fff"></div>
<div class="b" style="left:784px;top:708px;width:141px;height:1px;background:#d3d3d3"></div>
<div class="b" style="left:784px;top:707px;width:141px;height:1px;background:#fff"></div>
<div class="b" style="left:784px;top:709px;width:141px;height:1px;background:#fff"></div>
<div class="b" style="left:34px;top:647px;width:1365px;height:1px;background:#fff"></div>
<div class="b" style="left:135px;top:741px;width:1px;height:84px;background:#fff"></div>
<div class="b" style="left:283px;top:741px;width:1px;height:84px;background:#fff"></div>
<div class="b" style="left:334px;top:741px;width:1px;height:84px;background:#fff"></div>
<div class="b" style="left:451px;top:741px;width:1px;height:84px;background:#fff"></div>
<div class="b" style="left:524px;top:741px;width:1px;height:84px;background:#fff"></div>
<div class="b" style="left:641px;top:741px;width:1px;height:84px;background:#fff"></div>
<div class="b" style="left:783px;top:741px;width:1px;height:84px;background:#fff"></div>
<div class="b" style="left:925px;top:741px;width:1px;height:84px;background:#fff"></div>
<div class="b" style="left:1067px;top:741px;width:1px;height:84px;background:#fff"></div>
<div class="b" style="left:1209px;top:741px;width:1px;height:84px;background:#fff"></div>
<div class="b" style="left:136px;top:768px;width:147px;height:1px;background:#fff"></div>
<div class="b" style="left:136px;top:797px;width:147px;height:1px;background:#fff"></div>
<div class="b" style="left:335px;top:768px;width:116px;height:1px;background:#fff"></div>
<div class="b" style="left:335px;top:797px;width:116px;height:1px;background:#fff"></div>
<div class="b" style="left:525px;top:768px;width:116px;height:1px;background:#fff"></div>
<div class="b" style="left:525px;top:797px;width:116px;height:1px;background:#fff"></div>
<div class="b" style="left:784px;top:768px;width:141px;height:1px;background:#fff"></div>
<div class="b" style="left:784px;top:797px;width:141px;height:1px;background:#fff"></div>
<div class="b" style="left:34px;top:825px;width:1365px;height:1px;background:#fff"></div>
<div class="b" style="left:34px;top:826px;width:1365px;height:1px;background:#e3e3e3"></div>
<div class="t " style="left:144px;top:654px;font-size:13px;line-height:15px;color:#4d4d4d;font-weight:normal;">Количество</div>
<div class="t " style="left:144px;top:685px;font-size:13px;line-height:15px;color:#4d4d4d;font-weight:normal;">Увеличение</div>
<div class="t " style="left:144px;top:716px;font-size:13px;line-height:15px;color:#4d4d4d;font-weight:normal;">Уменьшение</div>
<div class="t " style="left:292px;top:654px;font-size:13px;line-height:15px;color:#4d4d4d;font-weight:normal;">Ед.</div>
<div class="t " style="left:292px;top:670px;font-size:13px;line-height:15px;color:#4d4d4d;font-weight:normal;">изм.</div>
<div class="t " style="left:343px;top:654px;font-size:13px;line-height:15px;color:#4d4d4d;font-weight:normal;">Всего</div>
<div class="t " style="left:343px;top:685px;font-size:13px;line-height:15px;color:#4d4d4d;font-weight:normal;">Увеличение</div>
<div class="t " style="left:343px;top:716px;font-size:13px;line-height:15px;color:#4d4d4d;font-weight:normal;">Уменьшение</div>
<div class="t " style="left:460px;top:654px;font-size:13px;line-height:15px;color:#4d4d4d;font-weight:normal;">Ставка</div>
<div class="t " style="left:460px;top:670px;font-size:13px;line-height:15px;color:#4d4d4d;font-weight:normal;">НДС</div>
<div class="t " style="left:533px;top:654px;font-size:13px;line-height:15px;color:#4d4d4d;font-weight:normal;">НДС</div>
<div class="t " style="left:533px;top:685px;font-size:13px;line-height:15px;color:#4d4d4d;font-weight:normal;">Увеличение</div>
<div class="t " style="left:533px;top:716px;font-size:13px;line-height:15px;color:#4d4d4d;font-weight:normal;">Уменьшение</div>
<div class="t " style="left:650px;top:654px;font-size:13px;line-height:15px;color:#4d4d4d;font-weight:normal;">Номер ГТД</div>
<div class="t " style="left:792px;top:654px;font-size:13px;line-height:15px;color:#4d4d4d;font-weight:normal;">Количество по РНПТ</div>
<div class="t " style="left:792px;top:685px;font-size:13px;line-height:15px;color:#4d4d4d;font-weight:normal;">Увеличение</div>
<div class="t " style="left:792px;top:716px;font-size:13px;line-height:15px;color:#4d4d4d;font-weight:normal;">Уменьшение</div>
<div class="t " style="left:934px;top:654px;font-size:13px;line-height:15px;color:#4d4d4d;font-weight:normal;">Предыдущий</div>
<div class="t " style="left:934px;top:670px;font-size:13px;line-height:15px;color:#4d4d4d;font-weight:normal;">счет-фактура</div>
<div class="t " style="left:1076px;top:654px;font-size:13px;line-height:15px;color:#4d4d4d;font-weight:normal;">Первичный</div>
<div class="t " style="left:1076px;top:670px;font-size:13px;line-height:15px;color:#4d4d4d;font-weight:normal;">счет-фактура</div>
<div class="t " style="left:1218px;top:654px;font-size:13px;line-height:15px;color:#4d4d4d;font-weight:normal;">Номер строки исходного СФ</div>
<div class="t" style="right:1181px;top:747px;line-height:15px;color:#333"><span class="d">8,000</span></div>
<div class="t" style="right:1181px;top:805px;line-height:15px;color:#333"><span class="d">2,000</span></div>
<div class="t " style="left:292px;top:747px;font-size:13px;line-height:15px;color:#333;font-weight:normal;">шт</div>
<div class="t" style="right:1013px;top:747px;line-height:15px;color:#333"><span class="d">14 400,00</span></div>
<div class="t" style="right:1013px;top:805px;line-height:15px;color:#333"><span class="d">3 600,00</span></div>
<div class="t " style="left:460px;top:747px;font-size:13px;line-height:15px;color:#333;font-weight:normal;"><span class="d">20</span>%</div>
<div class="t" style="right:823px;top:747px;line-height:15px;color:#333"><span class="d">2 400,00</span></div>
<div class="t" style="right:823px;top:805px;line-height:15px;color:#333"><span class="d">600,00</span></div>
<div class="t " style="left:650px;top:747px;font-size:13px;line-height:15px;color:#333;font-weight:normal;"><span class="d">22222</span>/<span class="d">010120</span>/<span class="d">22222</span></div>
<div class="t" style="right:539px;top:747px;line-height:15px;color:#333"><span class="d">4,00000000000</span></div>
<div class="t" style="right:539px;top:805px;line-height:15px;color:#333"><span class="d">1,00000000000</span></div>
<div class="t " style="left:934px;top:747px;font-size:13px;line-height:15px;color:#333;font-weight:normal;">Счет-фактура</div>
<div class="t " style="left:1076px;top:747px;font-size:13px;line-height:15px;color:#333;font-weight:normal;">Счет-фактура</div>
<div class="t " style="left:934px;top:763px;font-size:13px;line-height:15px;color:#333;font-weight:normal;">выданный</div>
<div class="t " style="left:1076px;top:763px;font-size:13px;line-height:15px;color:#333;font-weight:normal;">выданный</div>
<div class="t " style="left:934px;top:779px;font-size:13px;line-height:15px;color:#333;font-weight:normal;">СБ<span class="d">00</span>-<span class="d">0000001</span> от</div>
<div class="t " style="left:1076px;top:779px;font-size:13px;line-height:15px;color:#333;font-weight:normal;">СБ<span class="d">00</span>-<span class="d">0000001</span> от</div>
<div class="t " style="left:934px;top:795px;font-size:13px;line-height:15px;color:#333;font-weight:normal;"><span class="d">09.07.2021 12:00:01</span></div>
<div class="t " style="left:1076px;top:795px;font-size:13px;line-height:15px;color:#333;font-weight:normal;"><span class="d">09.07.2021 12:00:01</span></div>
<div class="b" style="left:1210px;top:741px;width:189px;height:84px;background:#fde38a;border:2px solid #f5c518"></div>
<div class="t" style="right:65px;top:747px;line-height:15px;color:#333"><span class="d">2</span></div>
<div class="b" style="left:637px;top:643px;width:293px;height:193px;border:3px solid #f00"></div>
<svg class="ic" style="left:43px;top:851px" width="4" height="7" viewBox="0 0 4 7"><path d="M4 0v7L0 3.5z" fill="#444"/></svg>
<div class="b" style="left:57px;top:850px;width:1319px;height:8px;background:#d4d4d4;border-radius:4px"></div>
<div class="b" style="left:440px;top:850px;width:936px;height:8px;background:#999;border-radius:4px"></div>
<svg class="ic" style="left:1386px;top:851px" width="4" height="7" viewBox="0 0 4 7"><path d="M0 0v7l4-3.5z" fill="#bbb"/></svg>
</body></html>
